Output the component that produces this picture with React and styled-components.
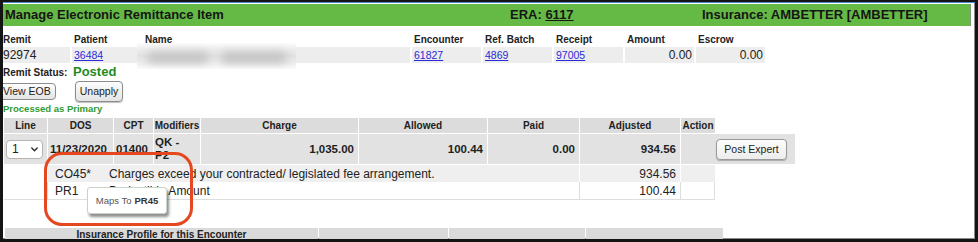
import React from "react";
import styled, { createGlobalStyle, css } from "styled-components";

const Global = createGlobalStyle`
  html, body { margin: 0; padding: 0; background: #fff; }
  body { font-family: "Liberation Sans", Arial, sans-serif; color: #222; }
  * { box-sizing: border-box; }
`;

const FONT = `"Liberation Sans", Arial, sans-serif`;

const Frame = styled.div`
  position: relative;
  width: 978px;
  height: 242px;
  border-style: solid;
  border-color: #141414;
  border-width: 2px 3px 3px 3px;
  overflow: hidden;
  background: #fff;
  box-shadow: inset -1px -1px 0 #8a8a8a;
  font-family: ${FONT};
`;

const TopStripe = styled.div`
  height: 1px;
  background: #4f86d0;
`;

const TitleBar = styled.div`
  display: grid;
  grid-template-columns: 505px 192px 1fr;
  height: 22px;
  margin: 1px 4px 0 0;
  padding: 0 0 1px 2px;
  background: #65ba45;
  border-right: 1px solid #7f9a74;
  font: bold 13px/21px ${FONT};
  color: #161616;
  white-space: nowrap;
`;

const TitleCell = styled.div``;

const EraNumber = styled.span`
  text-decoration: underline;
`;

const InfoGrid = styled.div`
  display: grid;
  grid-template-columns: 69px 69px 267px repeat(5, 69px);
  grid-template-rows: 13px 16px;
  column-gap: 2px;
  row-gap: 1px;
  margin: 7px 0 0 -2px;
`;

const InfoLabel = styled.div`
  font: bold 10px/13px ${FONT};
  color: #222;
  padding: 0 2px;
  white-space: nowrap;
`;

const InfoValue = styled.div`
  background: #ededed;
  font: 12px/16px ${FONT};
  color: #222;
  padding: 0 2px;
  text-align: ${(p) => (p.$right ? "right" : "left")};
  white-space: nowrap;
  overflow: hidden;
`;

const DataLink = styled.a`
  color: #2a2ad8;
  text-decoration: underline;
  font-size: 10.5px;
`;

const Redaction = styled.div`
  position: absolute;
  left: 134px;
  top: 41px;
  width: 159px;
  height: 26px;
  background: linear-gradient(
    to bottom,
    #fcfcfc 0%,
    #ececec 25%,
    #e2e2e2 50%,
    #ececec 75%,
    #fcfcfc 100%
  );
  display: flex;
  align-items: center;
  gap: 12px;
  padding: 2px 8px 0 10px;
  overflow: hidden;
  z-index: 2;
`;

const RedactBlob = styled.span`
  display: block;
  height: 11px;
  width: ${(p) => p.$w}px;
  border-radius: 6px;
  background: #c3c3c3;
  filter: blur(4px);
`;

const StatusRow = styled.div`
  display: grid;
  grid-template-columns: 69px auto;
  column-gap: 2px;
  align-items: baseline;
  height: 16px;
  margin: 1px 0 0 -2px;
  line-height: 16px;
`;

const StatusLabel = styled.span`
  font: bold 10px/16px ${FONT};
  color: #222;
  padding-left: 2px;
  white-space: nowrap;
`;

const StatusValue = styled.span`
  font: bold 13px/16px ${FONT};
  color: #1f8b1f;
  padding-left: 1px;
`;

const ButtonRow = styled.div`
  display: grid;
  grid-template-columns: 69px auto;
  column-gap: 2px;
  align-items: center;
  justify-items: start;
  height: 21px;
  margin: 1px 0 0 -2px;
`;

const ActionButton = styled.button`
  font: 10.5px/1 ${FONT};
  color: #222;
  border: 1px solid #8c8c8c;
  border-radius: 4px;
  background: linear-gradient(to bottom, #fdfdfd, #e4e4e4);
  padding: 0;
  cursor: pointer;
  white-space: nowrap;
  ${(p) =>
    p.$variant === "eob"
      ? css`
          height: 17px;
          width: 59px;
          margin-left: -4px;
          text-align: left;
          padding-left: 5px;
        `
      : css`
          height: 21px;
          width: 48px;
          margin-left: 3px;
          box-shadow: 0 1px 1px rgba(0, 0, 0, 0.25);
        `}
`;

const Processed = styled.div`
  margin-top: 1px;
  height: 11px;
  font: bold 9.5px/11px ${FONT};
  color: #2f9a2f;
`;

const COLS = "43px 65px 39px 46px 157px 128px 91px 100px";

const LineTable = styled.div`
  margin: 4px 0 0 1px;
  width: 794px;
`;

const HeadRow = styled.div`
  display: grid;
  grid-template-columns: ${COLS} 34px;
  column-gap: 1px;
  height: 15px;
`;

const HeadCell = styled.div`
  background: #dcdcdc;
  font: bold 10px/15px ${FONT};
  color: #222;
  text-align: center;
  white-space: nowrap;
  overflow: hidden;
`;

const DataRow = styled.div`
  display: grid;
  grid-template-columns: ${COLS} 114px;
  column-gap: 1px;
  height: 30px;
  margin-top: 1px;
`;

const DataCell = styled.div`
  background: #e2e2e2;
  display: flex;
  align-items: center;
  justify-content: ${(p) =>
    p.$align === "right" ? "flex-end" : p.$align === "center" ? "center" : "flex-start"};
  padding: ${(p) => (p.$align === "right" ? "0 4px 0 0" : "0 0 0 2px")};
  font: bold 11.5px/13px ${FONT};
  color: #1e1e1e;
  white-space: nowrap;
  overflow: hidden;
`;

const Modifiers = styled.div`
  background: #e2e2e2;
  display: flex;
  align-items: center;
  padding: 0 12px 0 1px;
  font: bold 11.5px/13px ${FONT};
  color: #1e1e1e;
  overflow: hidden;
`;

const FakeSelect = styled.div`
  width: 37px;
  height: 19px;
  background: #fff;
  border: 1px solid #b5b5b5;
  border-radius: 4px;
  display: flex;
  align-items: center;
  justify-content: space-between;
  padding: 0 4px 0 5px;
  font: 12px/1 ${FONT};
  color: #222;
  font-weight: normal;
`;

const PostButton = styled.button`
  width: 71px;
  height: 21px;
  font: 10.5px/1 ${FONT};
  color: #222;
  border: 1px solid #999;
  border-radius: 4px;
  background: linear-gradient(to bottom, #fdfdfd, #ececec);
  box-shadow: 0 1px 1px rgba(0, 0, 0, 0.25);
  padding: 0;
  margin-right: 4px;
  cursor: pointer;
`;

const SubRow = styled.div`
  display: grid;
  column-gap: 1px;
  width: 711px;
  ${(p) =>
    p.$tone === "shaded"
      ? css`
          grid-template-columns: 43px 531px 100px 34px;
          height: 17px;
          margin-top: 1px;
          background: #fff;
        `
      : css`
          grid-template-columns: 43px 531px 100px 33px;
          height: 18px;
          padding: 0 1px 1px 0;
          background: #dedede;
        `}
`;

const SubCell = styled.div`
  background: ${(p) => (p.$blank ? "#fff" : p.$tone === "shaded" ? "#efefef" : "#fff")};
  display: flex;
  align-items: center;
  justify-content: ${(p) => (p.$right ? "flex-end" : "flex-start")};
  padding-right: ${(p) => (p.$right ? "4px" : "0")};
  padding-top: 1px;
  font: 12px/17px ${FONT};
  color: #222;
  white-space: nowrap;
  overflow: hidden;
`;

const Code = styled.span`
  display: inline-block;
  width: 61px;
  padding-left: 7px;
`;

const Annotation = styled.div`
  position: absolute;
  left: 41px;
  top: 150px;
  width: 149px;
  height: 74px;
  border: 3.5px solid #e5481e;
  border-radius: 18px;
  z-index: 3;
  pointer-events: none;
`;

const Tooltip = styled.div`
  position: absolute;
  left: 84px;
  top: 185px;
  width: 80px;
  height: 27px;
  background: #fff;
  border: 1px solid #c8d4c8;
  border-radius: 3px;
  box-shadow: 2px 3px 3px rgba(0, 0, 0, 0.45);
  display: flex;
  align-items: center;
  justify-content: center;
  font: 9.5px/1 ${FONT};
  color: #555;
  white-space: nowrap;
  z-index: 4;
`;

const TipStrong = styled.b`
  color: #333;
  margin-left: 3px;
`;

const ProfileBand = styled.div`
  display: grid;
  grid-template-columns: 313px 129px 136px 137px;
  column-gap: 1px;
  height: 14px;
  margin: 28px 0 0 2px;
  width: 718px;
`;

const ProfileCell = styled.div`
  background: #dadada;
  font: bold 10px/14px ${FONT};
  color: #222;
  text-align: center;
  white-space: nowrap;
`;

const Chevron = () => (
  <svg width="7" height="5" viewBox="0 0 7 5">
    <polyline
      points="0.8,1 3.5,3.7 6.2,1"
      fill="none"
      stroke="#333"
      strokeWidth="1.5"
      strokeLinecap="round"
      strokeLinejoin="round"
    />
  </svg>
);

export default function App() {
  return (
    <>
      <Global />
      <Frame>
        <TopStripe />
        <TitleBar>
          <TitleCell>Manage Electronic Remittance Item</TitleCell>
          <TitleCell>
            ERA: <EraNumber>6117</EraNumber>
          </TitleCell>
          <TitleCell>Insurance: AMBETTER [AMBETTER]</TitleCell>
        </TitleBar>

        <InfoGrid>
          <InfoLabel>Remit</InfoLabel>
          <InfoLabel>Patient</InfoLabel>
          <InfoLabel>Name</InfoLabel>
          <InfoLabel>Encounter</InfoLabel>
          <InfoLabel>Ref. Batch</InfoLabel>
          <InfoLabel>Receipt</InfoLabel>
          <InfoLabel>Amount</InfoLabel>
          <InfoLabel>Escrow</InfoLabel>

          <InfoValue>92974</InfoValue>
          <InfoValue>
            <DataLink href="#">36484</DataLink>
          </InfoValue>
          <InfoValue />
          <InfoValue>
            <DataLink href="#">61827</DataLink>
          </InfoValue>
          <InfoValue>
            <DataLink href="#">4869</DataLink>
          </InfoValue>
          <InfoValue>
            <DataLink href="#">97005</DataLink>
          </InfoValue>
          <InfoValue $right>0.00</InfoValue>
          <InfoValue $right>0.00</InfoValue>
        </InfoGrid>

        <Redaction>
          <RedactBlob $w={62} />
          <RedactBlob $w={66} />
        </Redaction>

        <StatusRow>
          <StatusLabel>Remit Status:</StatusLabel>
          <StatusValue>Posted</StatusValue>
        </StatusRow>

        <ButtonRow>
          <ActionButton $variant="eob">View EOB</ActionButton>
          <ActionButton $variant="unapply">Unapply</ActionButton>
        </ButtonRow>

        <Processed>Processed as Primary</Processed>

        <LineTable>
          <HeadRow>
            <HeadCell>Line</HeadCell>
            <HeadCell>DOS</HeadCell>
            <HeadCell>CPT</HeadCell>
            <HeadCell>Modifiers</HeadCell>
            <HeadCell>Charge</HeadCell>
            <HeadCell>Allowed</HeadCell>
            <HeadCell>Paid</HeadCell>
            <HeadCell>Adjusted</HeadCell>
            <HeadCell>Action</HeadCell>
          </HeadRow>

          <DataRow>
            <DataCell>
              <FakeSelect>
                1
                <Chevron />
              </FakeSelect>
            </DataCell>
            <DataCell>11/23/2020</DataCell>
            <DataCell>01400</DataCell>
            <Modifiers>QK - P2</Modifiers>
            <DataCell $align="right">1,035.00</DataCell>
            <DataCell $align="right">100.44</DataCell>
            <DataCell $align="right">0.00</DataCell>
            <DataCell $align="right">934.56</DataCell>
            <DataCell $align="right">
              <PostButton>Post Expert</PostButton>
            </DataCell>
          </DataRow>

          <SubRow $tone="shaded">
            <SubCell $blank />
            <SubCell $tone="shaded">
              <Code>CO45*</Code>
              Charges exceed your contracted/ legislated fee arrangement.
            </SubCell>
            <SubCell $tone="shaded" $right>
              934.56
            </SubCell>
            <SubCell $tone="shaded" />
          </SubRow>

          <SubRow $tone="plain">
            <SubCell $blank />
            <SubCell>
              <Code>PR1</Code>
              Deductible Amount
            </SubCell>
            <SubCell $right>100.44</SubCell>
            <SubCell />
          </SubRow>
        </LineTable>

        <ProfileBand>
          <ProfileCell>Insurance Profile for this Encounter</ProfileCell>
          <ProfileCell />
          <ProfileCell />
          <ProfileCell />
        </ProfileBand>

        <Annotation />
        <Tooltip>
          Maps To<TipStrong>PR45</TipStrong>
        </Tooltip>
      </Frame>
    </>
  );
}
